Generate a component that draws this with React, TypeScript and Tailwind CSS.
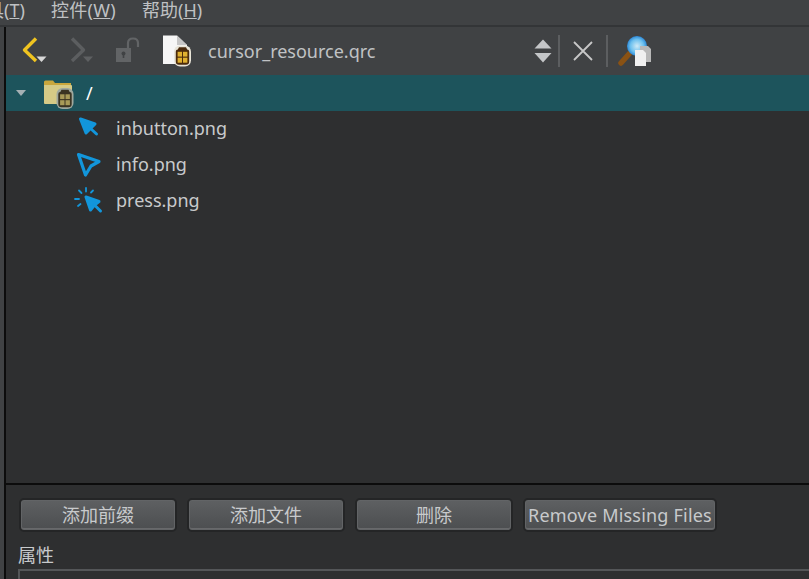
import React from "react";

const font = { fontFamily: '"Noto Sans", "Noto Sans CJK SC", sans-serif' };

const ResourceBadge = ({ x, y, dim }: { x: number; y: number; dim?: boolean }) => (
  <g transform={`translate(${x} ${y})`}>
    <rect x="0" y="0" width="17" height="21" rx="6" fill={dim ? "#a0a89e" : "#e8e4d8"} />
    <path d="M1.8 6 Q1.8 4 3.8 4 L5 1.8 H12 L13.2 4 Q15.2 4 15.2 6 V16 Q15.2 19.2 12 19.2 H5 Q1.8 19.2 1.8 16 Z" fill={dim ? "#3a3322" : "#4a2a0c"} />
    <rect x="3.6" y="6.3" width="4.4" height="4.8" fill={dim ? "#a89a58" : "#e0b030"} />
    <rect x="9" y="6.3" width="4.4" height="4.8" fill={dim ? "#a89a58" : "#e0b030"} />
    <rect x="3.6" y="12.2" width="4.4" height="5" fill={dim ? "#a89a58" : "#e0b030"} />
    <rect x="9" y="12.2" width="4.4" height="5" fill={dim ? "#a89a58" : "#e0b030"} />
  </g>
);

const BackIcon = () => (
  <svg width="28" height="32" viewBox="0 0 28 32" className="shrink-0">
    <path d="M15 3.5 L3.5 15 L15 26" fill="none" stroke="#f0c420" strokeWidth="3.4" strokeLinejoin="round" />
    <path d="M15.5 21.5 H25.5 L20.5 27 Z" fill="#d8d8d8" />
  </svg>
);

const ForwardIcon = () => (
  <svg width="28" height="32" viewBox="0 0 28 32" className="shrink-0">
    <path d="M3 3.5 L14.5 15 L3 26" fill="none" stroke="#5c5e60" strokeWidth="3.4" strokeLinejoin="round" />
    <path d="M14 21.5 H24 L19 27 Z" fill="#5e6062" />
  </svg>
);

const LockIcon = () => (
  <svg width="28" height="28" viewBox="0 0 28 28" className="shrink-0">
    <rect x="1" y="11" width="15" height="14" fill="#626466" />
    <circle cx="8.5" cy="16.5" r="2" fill="#404244" />
    <rect x="7.7" y="17" width="1.6" height="4" fill="#404244" />
    <path d="M13 11 V6 Q13 1.5 18 1.5 Q23 1.5 23 6 V10" fill="none" stroke="#626466" strokeWidth="2.2" />
  </svg>
);

const QrcIcon = () => (
  <svg width="30" height="32" viewBox="0 0 30 32" className="shrink-0">
    <path d="M1 0.5 H15 L25 10 V29 H1 Z" fill="#f6f6f6" />
    <path d="M15 0.5 V10 H25 Z" fill="#c6c6c6" />
    <ResourceBadge x={12} y={10.5} />
  </svg>
);

const SortIcon = () => (
  <svg width="18" height="24" viewBox="0 0 18 24" className="shrink-0">
    <path d="M9 0.5 L17.5 9.5 H0.5 Z" fill="#c4c6c8" />
    <path d="M9 23.5 L17.5 14 H0.5 Z" fill="#c4c6c8" />
  </svg>
);

const CloseIcon = () => (
  <svg width="22" height="22" viewBox="0 0 22 22" className="shrink-0">
    <path d="M2 2 L20 20 M20 2 L2 20" stroke="#c8c8c8" strokeWidth="1.8" />
  </svg>
);

const FindIcon = () => (
  <svg width="36" height="32" viewBox="0 0 36 32" className="shrink-0">
    <defs>
      <radialGradient id="lens" cx="0.5" cy="0.5" r="0.55">
        <stop offset="0" stopColor="#cfeaf6" />
        <stop offset="0.6" stopColor="#6cc0ee" />
        <stop offset="1" stopColor="#1a78d0" />
      </radialGradient>
    </defs>
    <path d="M3 28 L11 19" stroke="#8a5214" strokeWidth="5.5" strokeLinecap="round" />
    <circle cx="19" cy="11" r="10" fill="url(#lens)" />
    <path d="M22 11 H30 L33 14 V27 H22 Z" fill="#b8b8b8" />
    <path d="M17 15 H25 L28 18 V31 H17 Z" fill="#f0f0f0" />
  </svg>
);

const FolderIcon = () => (
  <svg width="32" height="32" viewBox="0 0 32 32" className="shrink-0">
    <path d="M0 2 Q0 0.5 1.5 0.5 H9 L11 3 H27 V6 H0 Z" fill="#c9a63c" />
    <path d="M0 5 H27 Q28 5 28 6 V24 H1 Q0 24 0 23 Z" fill="#d6ca86" />
    <ResourceBadge x={12.5} y={8} dim />
  </svg>
);

const CursorIcon = () => (
  <svg width="26" height="26" viewBox="0 0 26 26" className="shrink-0">
    <path d="M3.5 3 L18 8 L13.5 12.5 L9 17 Z" fill="#1296db" stroke="#1296db" strokeWidth="3" strokeLinejoin="round" />
    <path d="M13 12 L19.5 18" stroke="#1296db" strokeWidth="3" strokeLinecap="round" />
  </svg>
);

const OutlineCursorIcon = () => (
  <svg width="26" height="26" viewBox="0 0 26 26" className="shrink-0">
    <path d="M2.5 2.5 L23 9.5 L15 14 L9.5 23 Z" fill="none" stroke="#1296db" strokeWidth="3.2" strokeLinejoin="round" />
  </svg>
);

const PressCursorIcon = () => (
  <svg width="30" height="28" viewBox="0 0 30 28" className="shrink-0">
    <path d="M12 10 L25 14.5 L20.5 18 L16.5 23 Z" fill="#1296db" stroke="#1296db" strokeWidth="3" strokeLinejoin="round" />
    <path d="M20.5 18 L26.5 24" stroke="#1296db" strokeWidth="3" strokeLinecap="round" />
    <path d="M12 1 V4.5 M5 3.5 L7.5 6 M1 12 H5 M4 19 L6.5 17 M19 3.5 L17 5.5" stroke="#1296db" strokeWidth="1.8" strokeLinecap="round" />
  </svg>
);

const Separator = () => <div className="w-0.5 h-8 bg-[#5c5e60] shrink-0" />;

const FileRow = ({ icon, name, iconClass }: { icon: React.ReactNode; name: string; iconClass: string }) => (
  <div className="h-9 flex items-center relative pl-[110px] pb-[2px] text-[#c8cacc] text-lg">
    <div className={`absolute top-1/2 -translate-y-1/2 ${iconClass}`}>{icon}</div>
    {name}
  </div>
);

const ActionButton = ({ label, wide }: { label: string; wide?: boolean }) => (
  <button
    className={`${wide ? "w-[194px] tracking-[0.2px]" : "w-[158px]"} h-[34px] shrink-0 rounded-[5px] border-2 border-[#242526] bg-gradient-to-b from-[#5e6062] to-[#4c4e50] shadow-[inset_0_0_0_1px_#626466,inset_0_-2px_0_#68696b] text-[#c8cacc] text-lg leading-none flex items-center justify-center whitespace-nowrap`}
  >
    {label}
  </button>
);

export default function App() {
  return (
    <div className="w-[809px] h-[579px] overflow-hidden bg-[#404244] flex flex-col" style={font}>
      {/* menu */}
      <div className="h-[25px] shrink-0 flex items-center pb-[6px] text-[#bfc1c3] text-lg leading-none whitespace-nowrap">
        <span className="ml-[-14px] w-[65px]">具(<u>T</u>)</span>
        <span className="w-[91px] tracking-[0.3px]">控件(<u>W</u>)</span>
        <span>帮助(<u>H</u>)</span>
      </div>
      <div className="h-[2px] shrink-0 bg-[#333537]" />

      <div className="flex-1 flex min-h-0">
        <div className="w-1 shrink-0 bg-[#404244]" />
        <div className="w-0.5 shrink-0 bg-[#0c0c0c]" />

        <div className="flex-1 flex flex-col min-w-0">
          {/* toolbar */}
          <div className="h-12 shrink-0 flex items-center relative text-[#c0c2c4] text-lg">
            <div className="ml-[15px]"><BackIcon /></div>
            <div className="ml-[20px]"><ForwardIcon /></div>
            <div className="ml-[18px]"><LockIcon /></div>
            <div className="ml-[19px]"><QrcIcon /></div>
            <span className="ml-[16px] w-[326px]">cursor_resource.qrc</span>
            <SortIcon />
            <div className="ml-[6px]"><Separator /></div>
            <div className="ml-[12px]"><CloseIcon /></div>
            <div className="ml-[12px]"><Separator /></div>
            <div className="ml-[10px]"><FindIcon /></div>
          </div>

          {/* resource tree */}
          <div className="flex-1 bg-[#2e2f30] min-h-0">
            <div className="h-9 bg-[#1d545c] flex items-center relative pl-[80px] text-white text-lg">
              <div className="absolute left-[10px] top-[15px] w-0 h-0 border-l-[5px] border-r-[5px] border-t-[6px] border-l-transparent border-r-transparent border-t-[#a5b0b4]" />
              <div className="absolute left-[38px] top-[5px]"><FolderIcon /></div>
              /
            </div>
            <FileRow icon={<CursorIcon />} name="inbutton.png" iconClass="left-[71px]" />
            <FileRow icon={<OutlineCursorIcon />} name="info.png" iconClass="left-[70px]" />
            <FileRow icon={<PressCursorIcon />} name="press.png" iconClass="left-[68px]" />
          </div>

          <div className="h-0.5 shrink-0 bg-[#0c0c0c]" />

          {/* bottom panel */}
          <div className="h-[94px] shrink-0 bg-[#2e2f30] pl-[12px] pt-[13px] text-[#c8cacc] text-lg">
            <div className="flex gap-2.5 ml-px">
              <ActionButton label="添加前缀" />
              <ActionButton label="添加文件" />
              <ActionButton label="删除" />
              <ActionButton label="Remove Missing Files" wide />
            </div>
            <div className="mt-[9px] h-[28px] leading-[28px]">属性</div>
            <div className="h-6 border-t-2 border-l-2 border-[#545658]" />
          </div>
        </div>
      </div>
    </div>
  );
}
